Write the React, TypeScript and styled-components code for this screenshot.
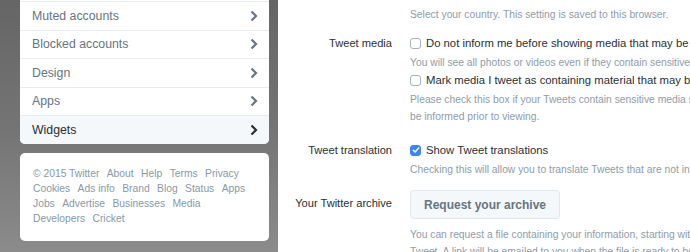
import React from 'react';
import styled, { createGlobalStyle } from 'styled-components';

//Styles:
const GlobalStyle = createGlobalStyle`
    html, body {
        margin: 0;
        padding: 0;
        background: #ffffff;
    }
    body {
        font-family: 'Liberation Sans', Arial, sans-serif;
        color: #292f33;
    }
`;

const Page = styled.div`
    display: flex;
    width: 690px;
    height: 252px;
    overflow: hidden;
`;

const Sidebar = styled.aside`
    flex: 0 0 278px;
    box-sizing: border-box;
    padding: 0 9px 0 20px;
    background: linear-gradient(180deg, #656565 0%, #747474 50%, #8b8b8b 100%);
`;

const MenuCard = styled.nav`
    padding-top: 1px;
    background: #ffffff;
    border-radius: 0 0 5px 5px;
    overflow: hidden;
`;

const MenuRow = styled.a<MenuRowProps>`
    display: flex;
    align-items: center;
    justify-content: space-between;
    box-sizing: border-box;
    height: 28.5px;
    padding: 0 11px 0 12px;
    font-size: 12.3px;
    color: ${(p) => (p.active ? '#292f33' : '#66757f')};
    background: ${(p) => (p.active ? '#f5f8fa' : '#ffffff')};
    border-top: 1px solid #e6ecf0;
    text-decoration: none;
`;

const Chevron = styled.svg`
    width: 8px;
    height: 12px;
    flex: none;
`;

const FooterCard = styled.footer`
    margin-top: 9px;
    padding: 13px 10px 14px 13px;
    background: #ffffff;
    border-radius: 5px;
    display: flex;
    flex-wrap: wrap;
    line-height: 15.3px;
`;

const FooterLink = styled.a`
    margin-right: 7.4px;
    font-size: 10.3px;
    color: #8899a6;
    white-space: nowrap;
    text-decoration: none;
`;

const Content = styled.main`
    flex: 1;
    padding-top: 5.5px;
    background: #ffffff;
`;

const Row = styled.section<RowProps>`
    display: grid;
    grid-template-columns: 114px 1fr;
    column-gap: 18px;
    margin-top: ${(p) => p.top}px;
`;

const Label = styled.div<LabelProps>`
    padding-top: ${(p) => p.pad || 0}px;
    text-align: right;
    font-size: 11.1px;
    line-height: 19px;
    color: #292f33;
    white-space: nowrap;
`;

const Controls = styled.div`
    display: flex;
    flex-direction: column;
    align-items: flex-start;
    white-space: nowrap;
`;

const CheckLine = styled.label`
    display: flex;
    align-items: center;
    gap: 5px;
    height: 19px;
    font-size: 11.3px;
    color: #292f33;
`;

const Box = styled.span<BoxProps>`
    display: inline-flex;
    align-items: center;
    justify-content: center;
    box-sizing: border-box;
    width: 11px;
    height: 11px;
    border-radius: 3px;
    border: 1px solid ${(p) => (p.checked ? '#3b86f0' : '#a9b3bb')};
    background: ${(p) => (p.checked ? '#3b86f0' : '#ffffff')};
`;

const Hint = styled.p<HintProps>`
    margin: ${(p) => p.top ?? 1}px 0 0;
    font-size: 10.3px;
    line-height: 17px;
    color: #8f9ca8;
`;

const ArchiveButton = styled.button`
    box-sizing: border-box;
    height: 29px;
    padding: 0 13px;
    font-family: 'Liberation Sans', Arial, sans-serif;
    font-size: 12px;
    font-weight: 700;
    color: #66757f;
    background: #f5f8fa;
    border: 1px solid #e1e8ed;
    border-radius: 4px;
`;

//Interface:
interface MenuRowProps {
    active?: boolean;
}

interface RowProps {
    top: number;
}

interface LabelProps {
    pad?: number;
}

interface BoxProps {
    checked?: boolean;
}

interface HintProps {
    top?: number;
}

const menuItems = ['Muted accounts', 'Blocked accounts', 'Design', 'Apps', 'Widgets'];

const footerLinks = [
    '© 2015 Twitter', 'About', 'Help', 'Terms', 'Privacy',
    'Cookies', 'Ads info', 'Brand', 'Blog', 'Status', 'Apps',
    'Jobs', 'Advertise', 'Businesses', 'Media', 'Developers', 'Cricket',
];

const Checkbox = ({ checked }: BoxProps): JSX.Element => (
    <Box checked={checked}>
        {checked && (
            <svg width="8" height="8" viewBox="0 0 8 8">
                <path d="M1.3 4.2l1.8 1.8 3.6-4" fill="none" stroke="#fff" strokeWidth="1.5" strokeLinecap="round" strokeLinejoin="round" />
            </svg>
        )}
    </Box>
);

const App = (): JSX.Element => {
    return (
        <Page>
            <GlobalStyle />
            <Sidebar>
                <MenuCard>
                    {menuItems.map((item) => (
                        <MenuRow key={item} active={item === 'Widgets'}>
                            {item}
                            <Chevron viewBox="0 0 8 12">
                                <path
                                    d="M1.5 1.5l4.5 4.5-4.5 4.5"
                                    fill="none"
                                    stroke={item === 'Widgets' ? '#292f33' : '#66757f'}
                                    strokeWidth="2.2"
                                />
                            </Chevron>
                        </MenuRow>
                    ))}
                </MenuCard>
                <FooterCard>
                    {footerLinks.map((link) => (
                        <FooterLink key={link}>{link}</FooterLink>
                    ))}
                </FooterCard>
            </Sidebar>
            <Content>
                <Row top={0}>
                    <Label />
                    <Controls>
                        <Hint top={0}>Select your country. This setting is saved to this browser.</Hint>
                    </Controls>
                </Row>
                <Row top={11}>
                    <Label>Tweet media</Label>
                    <Controls>
                        <CheckLine>
                            <Checkbox />
                            Do not inform me before showing media that may be sensitive
                        </CheckLine>
                        <Hint>You will see all photos or videos even if they contain sensitive content.</Hint>
                        <CheckLine>
                            <Checkbox />
                            Mark media I tweet as containing material that may be sensitive
                        </CheckLine>
                        <Hint>
                            Please check this box if your Tweets contain sensitive media so that users may
                            <br />
                            be informed prior to viewing.
                        </Hint>
                    </Controls>
                </Row>
                <Row top={16}>
                    <Label>Tweet translation</Label>
                    <Controls>
                        <CheckLine>
                            <Checkbox checked />
                            Show Tweet translations
                        </CheckLine>
                        <Hint>Checking this will allow you to translate Tweets that are not in your language.</Hint>
                    </Controls>
                </Row>
                <Row top={12.5}>
                    <Label pad={3.5}>Your Twitter archive</Label>
                    <Controls>
                        <ArchiveButton>Request your archive</ArchiveButton>
                        <Hint top={7}>
                            You can request a file containing your information, starting with your first
                            <br />
                            Tweet. A link will be emailed to you when the file is ready to be downloaded.
                        </Hint>
                    </Controls>
                </Row>
            </Content>
        </Page>
    );
};

export default App;
